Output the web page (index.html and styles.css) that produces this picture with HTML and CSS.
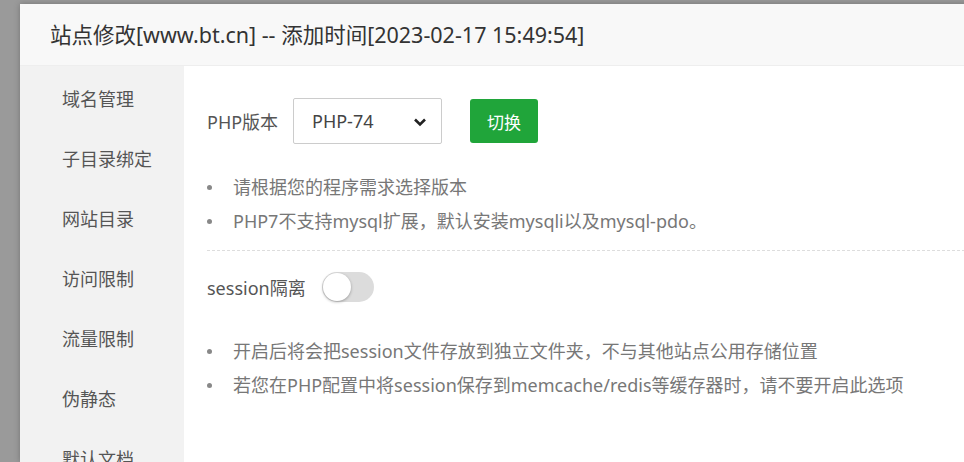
FILE: index.html
```html
<!DOCTYPE html>
<html>

<head>
    <meta charset="utf-8" />
    <title>站点修改</title>
    <meta name="viewport" content="width=device-width, initial-scale=1">
    <link rel="stylesheet" href="styles.css">
</head>

<body>
    <div class="dialog">
        <div class="dialog-title">站点修改[www.bt.cn] -- 添加时间[2023-02-17 15:49:54]</div>
        <div class="dialog-body">
            <ul class="side-menu">
                <li>域名管理</li>
                <li>子目录绑定</li>
                <li>网站目录</li>
                <li>访问限制</li>
                <li>流量限制</li>
                <li>伪静态</li>
                <li>默认文档</li>
            </ul>
            <div class="panel">
                <div class="php-row">
                    <span class="label">PHP版本</span>
                    <div class="select">
                        <span>PHP-74</span>
                        <svg class="chevron" width="14" height="10" viewBox="0 0 14 10">
                            <path d="M2 2.5 L7 7.5 L12 2.5" fill="none" stroke="#222" stroke-width="2.6" />
                        </svg>
                    </div>
                    <button class="btn-green">切换</button>
                </div>
                <ul class="tips">
                    <li>请根据您的程序需求选择版本</li>
                    <li>PHP7不支持mysql扩展，默认安装mysqli以及mysql-pdo。</li>
                </ul>
                <div class="dashed"></div>
                <div class="session-row">
                    <span class="label">session隔离</span>
                    <span class="switch"><i></i></span>
                </div>
                <ul class="tips tips-session">
                    <li>开启后将会把session文件存放到独立文件夹，不与其他站点公用存储位置</li>
                    <li>若您在PHP配置中将session保存到memcache/redis等缓存器时，请不要开启此选项</li>
                </ul>
            </div>
        </div>
    </div>
</body>

</html>
```

FILE: styles.css
```css
/* base */

html, body {
    margin: 0;
    height: 100%;
}

body {
    background-color: #9a9a9a;
    overflow: hidden;
    font-family: "Noto Sans", "Noto Sans CJK SC", sans-serif;
    font-size: 18px;
    color: #555;
    padding: 4px 0 0 20px;
    box-sizing: border-box;
}

ul {
    margin: 0;
    padding: 0;
    list-style: none;
}

/* dialog */

.dialog {
    width: 1000px;
    height: 100%;
    background-color: #fff;
    display: flex;
    flex-direction: column;
    box-shadow: 0 0 6px rgba(0, 0, 0, 0.25);
}

.dialog-title {
    height: 61px;
    line-height: 61px;
    padding-left: 30px;
    background-color: #f8f8f8;
    border-bottom: 1px solid #eee;
    color: #333;
    font-size: 21.5px;
    flex-shrink: 0;
}

.dialog-body {
    flex: 1;
    display: flex;
}

/* side menu */

.side-menu {
    width: 164px;
    background-color: #f2f2f2;
    padding-top: 3px;
    flex-shrink: 0;
}

.side-menu li {
    height: 60px;
    line-height: 60px;
    padding-left: 42px;
    color: #555;
}

/* panel */

.panel {
    flex: 1;
    padding: 32px 0 0 23px;
}

.php-row {
    display: flex;
    align-items: center;
}

.php-row .label {
    width: 86px;
}

.select {
    width: 149px;
    height: 46px;
    border: 1px solid #ccc;
    border-radius: 2px;
    display: flex;
    align-items: center;
    justify-content: space-between;
    padding: 0 14px 0 18px;
    box-sizing: border-box;
    color: #444;
}

.chevron {
    margin-top: 1px;
}

.btn-green {
    margin-left: 28px;
    width: 68px;
    height: 44px;
    border: none;
    border-radius: 3px;
    background-color: #20a53a;
    color: #fff;
    font-family: inherit;
    font-size: 17px;
}

.tips {
    margin-top: 26px;
    color: #777;
}

.tips li {
    line-height: 34px;
    padding-left: 26px;
    position: relative;
}

.tips li::before {
    content: "";
    position: absolute;
    left: 0;
    top: 15px;
    width: 5px;
    height: 5px;
    border-radius: 50%;
    background-color: #888;
}

.dashed {
    margin-top: 12px;
    border-top: 1px dashed #ddd;
}

.session-row {
    display: flex;
    align-items: center;
    height: 34px;
    margin-top: 19px;
}

.session-row .label {
    margin-right: 16px;
}

.switch {
    width: 52px;
    height: 30px;
    border-radius: 15px;
    background-color: #dcdcdc;
    position: relative;
}

.switch i {
    position: absolute;
    left: 1px;
    top: 1px;
    width: 28px;
    height: 28px;
    border-radius: 50%;
    background-color: #fff;
    box-shadow: 0 1px 3px rgba(0, 0, 0, 0.3);
}

.tips-session {
    margin-top: 30px;
}
```
